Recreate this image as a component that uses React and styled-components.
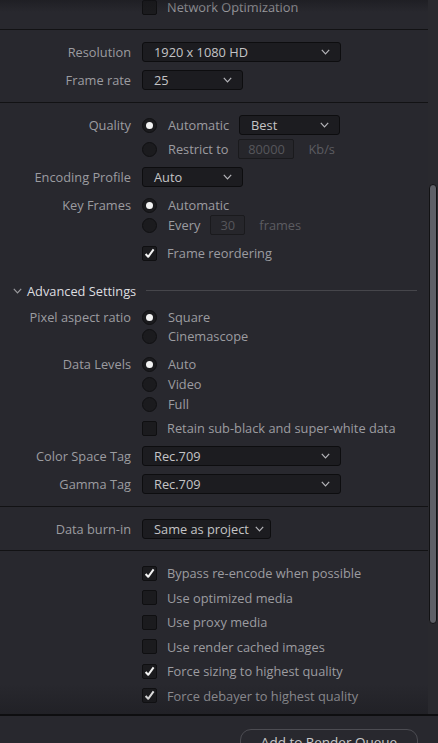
import React from 'react';
import styled, { createGlobalStyle } from 'styled-components';

const GlobalStyle = createGlobalStyle`
  html, body {
    margin: 0;
    padding: 0;
    background: #28282e;
  }
  body {
    font-family: "Open Sans", "Noto Sans", sans-serif;
    font-size: 12.8px;
  }
`;

const Page = styled.div`
  width: 438px;
  height: 743px;
  display: flex;
  flex-direction: column;
  background: #28282e;
  overflow: hidden;
`;

const Body = styled.div`
  display: flex;
  height: 714px;
  flex-shrink: 0;
`;

const Scroll = styled.div`
  position: relative;
  flex: 1;
  overflow: hidden;
  display: flex;
  flex-direction: column;

  &::before,
  &::after {
    content: '';
    position: absolute;
    left: 0;
    right: 0;
    pointer-events: none;
  }
  &::before {
    top: 0;
    height: 12px;
    background: linear-gradient(rgba(20, 20, 24, 0.45), rgba(40, 40, 46, 0));
  }
  &::after {
    bottom: 0;
    height: 30px;
    background: linear-gradient(rgba(20, 20, 24, 0), rgba(20, 20, 24, 0.35));
  }
`;

const Track = styled.div`
  width: 10px;
  display: flex;
  justify-content: center;
  background: #29292e;
`;

const Thumb = styled.div`
  margin-top: 184px;
  width: 6px;
  height: 438px;
  border-radius: 4px;
  background: #5e6067;
  border: 1px solid #121214;
`;

const Section = styled.div`
  display: flex;
  flex-direction: column;
  gap: ${p => p.gap || 0}px;
  padding: ${p => p.pt || 0}px 0 ${p => p.pb || 0}px;
  margin-top: ${p => p.mt || 0}px;
`;

const Divider = styled.div`
  height: 1px;
  background: #121214;
  flex-shrink: 0;
`;

const Row = styled.div`
  display: grid;
  grid-template-columns: 131px 1fr;
  column-gap: 11px;
  align-items: center;
  height: 20px;
  margin-top: ${p => p.mt || 0}px;
  flex-shrink: 0;
`;

const Label = styled.div`
  text-align: right;
  color: #9c9ca0;
  white-space: nowrap;
`;

const Cell = styled.div`
  display: flex;
  align-items: center;
`;

const Select = styled.div`
  box-sizing: border-box;
  width: ${p => p.w}px;
  height: 20px;
  margin-left: ${p => p.ml || 0}px;
  display: flex;
  align-items: center;
  justify-content: ${p => (p.tight ? 'flex-start' : 'space-between')};
  gap: 6px;
  padding: 0 ${p => (p.tight ? 4 : 10)}px 0 11px;
  background: #1c1c20;
  border: 1px solid #0d0d0f;
  border-radius: 3px;
  color: #c4c4c6;
  white-space: nowrap;

  svg {
    flex-shrink: 0;
  }
`;

const Field = styled.div`
  box-sizing: border-box;
  width: ${p => p.w}px;
  height: 20px;
  margin-left: 10px;
  display: flex;
  align-items: center;
  justify-content: center;
  background: #26262b;
  border: 1px solid #1a1a1d;
  border-radius: 2px;
  color: #56565b;
`;

const Unit = styled.span`
  margin-left: 14px;
  color: #5c5c61;
`;

const Option = styled.span`
  margin-left: ${p => p.gap || 11}px;
  color: #9c9ca0;
  white-space: nowrap;
`;

const RadioDot = styled.span`
  box-sizing: border-box;
  width: 15px;
  height: 15px;
  border-radius: 50%;
  background: #1b1b1e;
  border: 1px solid #101012;
  display: flex;
  align-items: center;
  justify-content: center;
  flex-shrink: 0;

  &::after {
    content: '';
    width: 7px;
    height: 7px;
    border-radius: 50%;
    background: ${p => (p.on ? '#f2f2f2' : 'transparent')};
  }
`;

const Box = styled.span`
  box-sizing: border-box;
  width: 15px;
  height: 15px;
  border-radius: 2px;
  background: #1b1b1e;
  border: 1px solid #0f0f11;
  display: flex;
  align-items: center;
  justify-content: center;
  flex-shrink: 0;
`;

const Group = styled.div`
  display: flex;
  align-items: center;
  height: 20px;
  margin-top: ${p => p.mt || 0}px;
  flex-shrink: 0;
  padding-left: 13px;
`;

const GroupTitle = styled.span`
  margin-left: 5px;
  color: #dedee0;
  white-space: nowrap;
`;

const GroupLine = styled.div`
  flex: 1;
  height: 1px;
  background: #46464b;
  margin: 0 11px 1px 10px;
`;

const Footer = styled.div`
  border-top: 2px solid #0e0e10;
  flex: 1;
  min-height: 0;
  display: flex;
  justify-content: flex-end;
  padding: 13px 20px 0 0;
  background: #28282e;
`;

const QueueButton = styled.div`
  box-sizing: border-box;
  flex-shrink: 0;
  width: 178px;
  height: 32px;
  border: 1px solid #4c4c52;
  border-radius: 11px;
  color: #c8c8ca;
  display: flex;
  justify-content: center;
  padding-top: 3px;
  font-size: 13.5px;
`;

function Chevron({ color = '#b4b4b8' }) {
  return (
    <svg width="9" height="6" viewBox="0 0 9 6" fill="none">
      <polyline points="0.8,0.8 4.5,4.8 8.2,0.8" stroke={color} strokeWidth="1.2" />
    </svg>
  );
}

function Check() {
  return (
    <svg width="11" height="11" viewBox="0 0 11 11" fill="none">
      <path d="M1.6 6 L4.2 8.8 L9.6 1.4" stroke="#f4f4f4" strokeWidth="2" strokeLinejoin="round" />
    </svg>
  );
}

function Dropdown({ value, w, ml, tight }) {
  return (
    <Select w={w} ml={ml} tight={tight}>
      <span>{value}</span>
      <Chevron />
    </Select>
  );
}

function Radio({ on, children }) {
  return (
    <>
      <RadioDot on={on} />
      <Option gap={11}>{children}</Option>
    </>
  );
}

function CheckItem({ on, children, mt }) {
  return (
    <Row mt={mt}>
      <Label />
      <Cell>
        <Box>{on && <Check />}</Box>
        <Option gap={10}>{children}</Option>
      </Cell>
    </Row>
  );
}

function Setting({ label, children, mt }) {
  return (
    <Row mt={mt}>
      <Label>{label}</Label>
      <Cell>{children}</Cell>
    </Row>
  );
}

export default function App() {
  return (
    <Page>
      <GlobalStyle />
      <Body>
        <Scroll>
          <Section mt={-3} pb={12}>
            <CheckItem on={false}>Network Optimization</CheckItem>
          </Section>
          <Divider />
          <Section pt={12} pb={12} gap={8}>
            <Setting label="Resolution">
              <Dropdown value="1920 x 1080 HD" w={199} />
            </Setting>
            <Setting label="Frame rate">
              <Dropdown value="25" w={101} />
            </Setting>
          </Section>
          <Divider />
          <Section pt={12} pb={12}>
            <Setting label="Quality">
              <Radio on>Automatic</Radio>
              <Dropdown value="Best" w={101} ml={10} />
            </Setting>
            <Setting label="" mt={4}>
              <Radio>Restrict to</Radio>
              <Field w={56}>80000</Field>
              <Unit>Kb/s</Unit>
            </Setting>
            <Setting label="Encoding Profile" mt={8}>
              <Dropdown value="Auto" w={101} />
            </Setting>
            <Setting label="Key Frames" mt={8}>
              <Radio on>Automatic</Radio>
            </Setting>
            <Setting label="">
              <Radio>Every</Radio>
              <Field w={35}>30</Field>
              <Unit>frames</Unit>
            </Setting>
            <CheckItem on mt={8}>Frame reordering</CheckItem>

            <Group mt={18}>
              <Chevron color="#9a9a9e" />
              <GroupTitle>Advanced Settings</GroupTitle>
              <GroupLine />
            </Group>

            <Setting label="Pixel aspect ratio" mt={6}>
              <Radio on>Square</Radio>
            </Setting>
            <Setting label="" mt={-1}>
              <Radio>Cinemascope</Radio>
            </Setting>
            <Setting label="Data Levels" mt={8}>
              <Radio on>Auto</Radio>
            </Setting>
            <Setting label="">
              <Radio>Video</Radio>
            </Setting>
            <Setting label="">
              <Radio>Full</Radio>
            </Setting>
            <CheckItem mt={4}>Retain sub-black and super-white data</CheckItem>
            <Setting label="Color Space Tag" mt={8}>
              <Dropdown value="Rec.709" w={199} />
            </Setting>
            <Setting label="Gamma Tag" mt={8}>
              <Dropdown value="Rec.709" w={199} />
            </Setting>
          </Section>
          <Divider />
          <Section pt={12} pb={11}>
            <Setting label="Data burn-in">
              <Dropdown value="Same as project" w={129} tight />
            </Setting>
          </Section>
          <Divider />
          <Section pt={12} gap={4.6}>
            <CheckItem on>Bypass re-encode when possible</CheckItem>
            <CheckItem>Use optimized media</CheckItem>
            <CheckItem>Use proxy media</CheckItem>
            <CheckItem>Use render cached images</CheckItem>
            <CheckItem on>Force sizing to highest quality</CheckItem>
            <CheckItem on>Force debayer to highest quality</CheckItem>
          </Section>
        </Scroll>
        <Track>
          <Thumb />
        </Track>
      </Body>
      <Footer>
        <QueueButton>Add to Render Queue</QueueButton>
      </Footer>
    </Page>
  );
}
